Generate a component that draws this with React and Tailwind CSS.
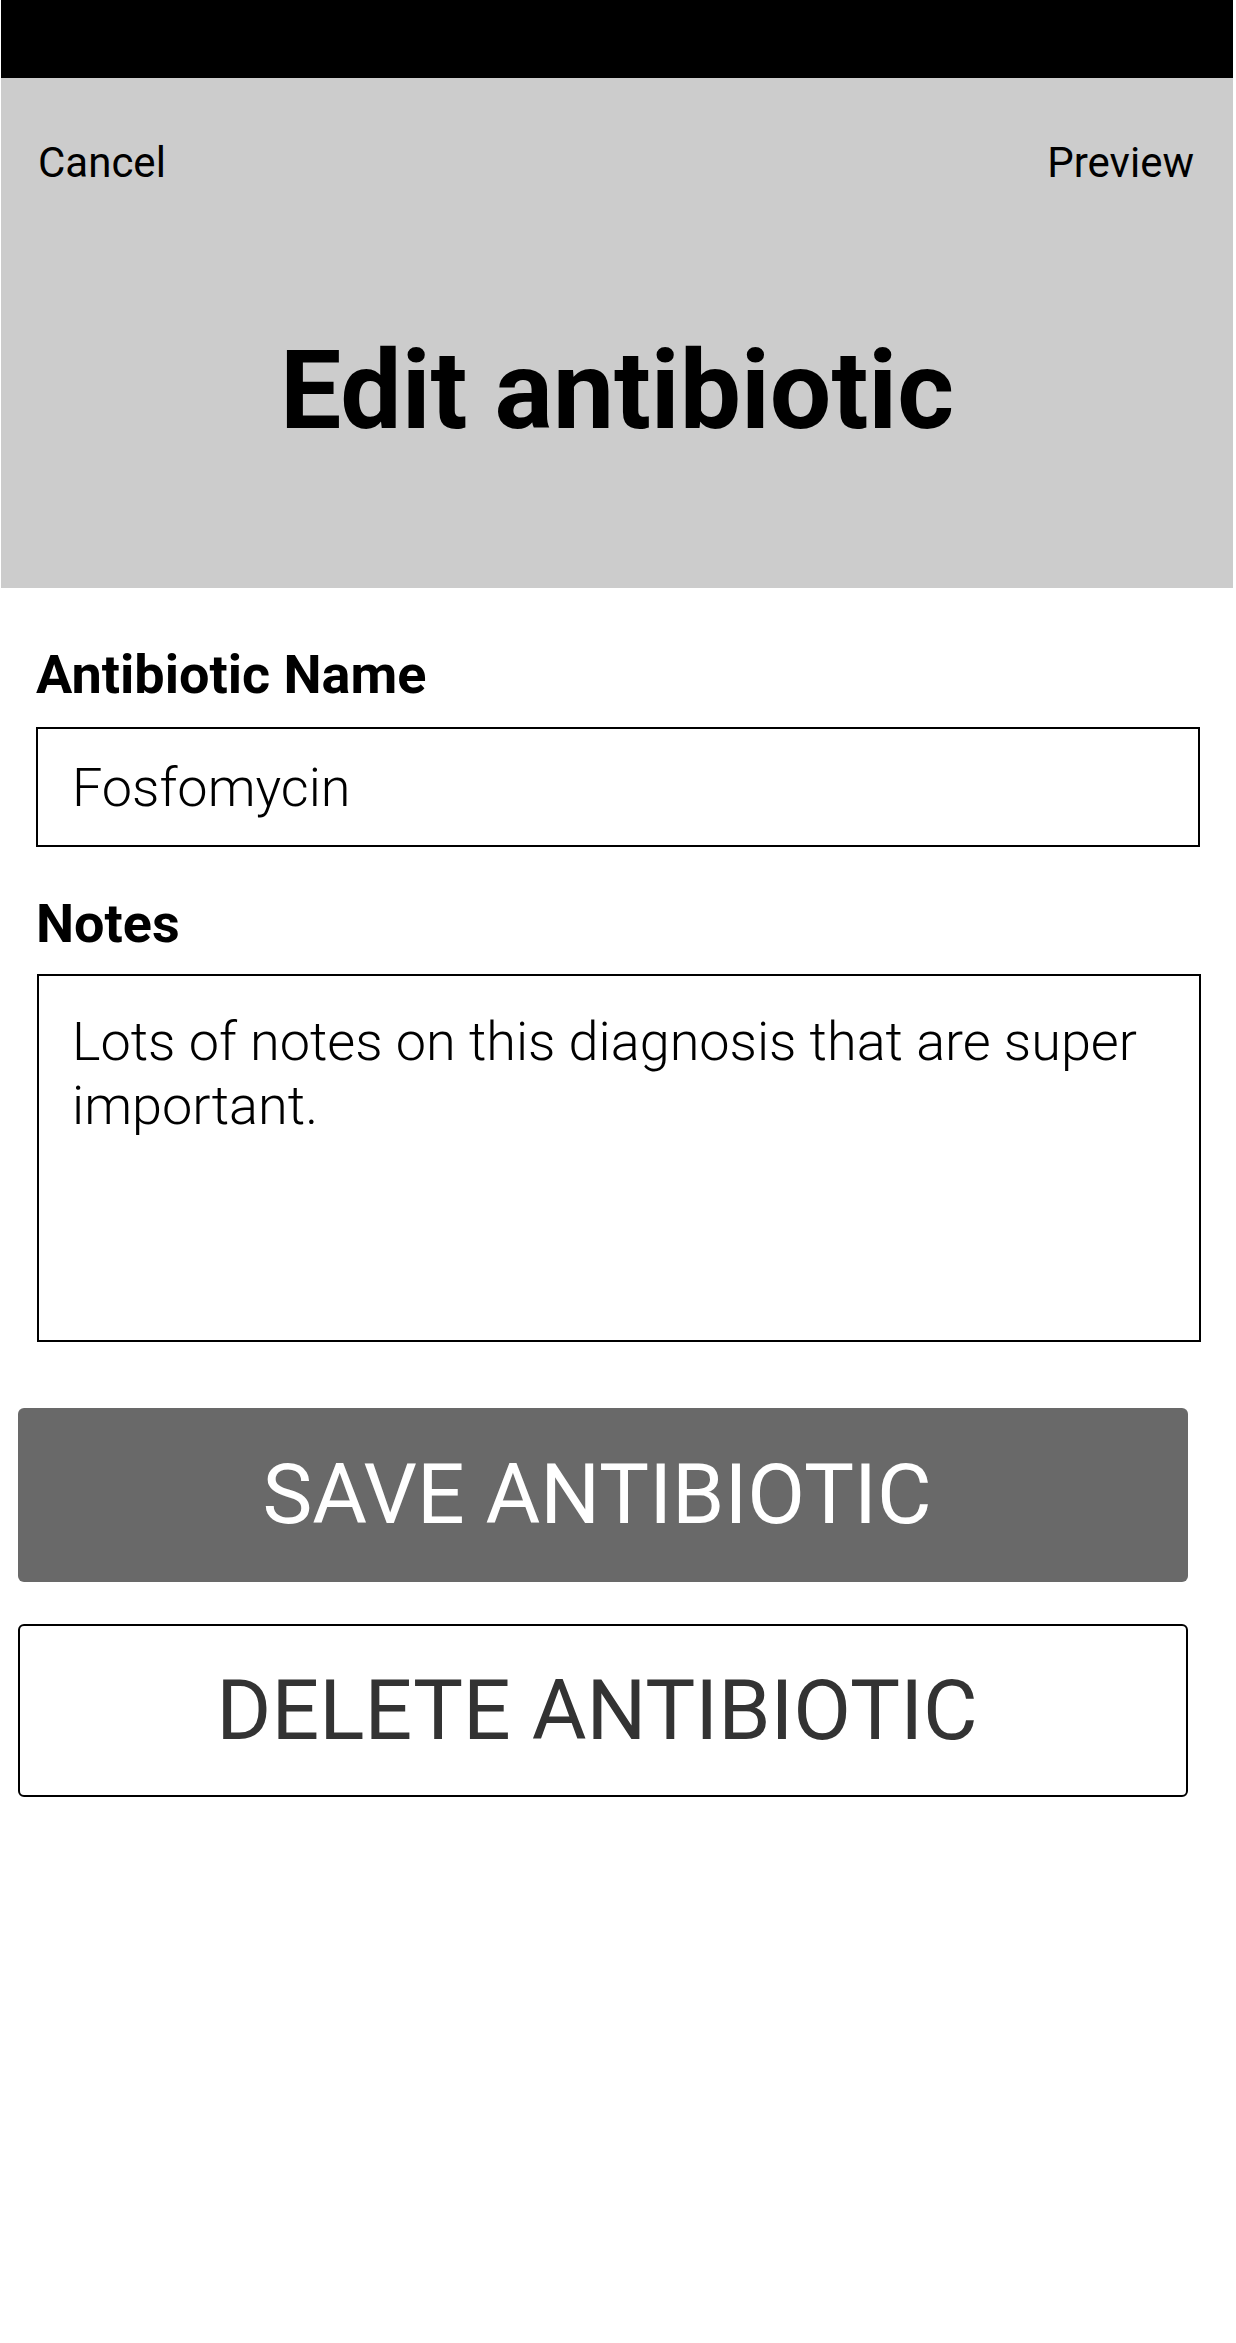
import React, { useState } from 'react';

const EditAntibioticPage = () => {
  const [name, setName] = useState('Fosfomycin');
  const [notes, setNotes] = useState('Lots of notes on this diagnosis that are super important.');

  return (
    <div className="min-h-[2343px] bg-white font-['Roboto',sans-serif] text-black">
      {/* Status bar + header */}
      <div className="pl-[1px] pr-[3px]">
        <div className="h-[78px] bg-black" />
        <header className="h-[510px] bg-[#cccccc] flex flex-col">
          <div className="flex justify-between pl-[37px] pr-[39px] pt-[64px] text-[42px] leading-none">
            <button type="button">Cancel</button>
            <button type="button">Preview</button>
          </div>
          <h1 className="mt-[153px] text-center text-[109px] font-bold leading-none">
            Edit antibiotic
          </h1>
        </header>
      </div>

      {/* Form */}
      <form className="flex flex-col" onSubmit={(e) => e.preventDefault()}>
        <div className="px-[36px]">
          <label htmlFor="name" className="block mt-[60px] text-[54px] font-bold leading-none">
            Antibiotic Name
          </label>
          <input
            id="name"
            type="text"
            value={name}
            onChange={(e) => setName(e.target.value)}
            className="mt-[25px] block w-full h-[120px] border-2 border-black px-[34px] text-[54px] font-light leading-none outline-none"
          />

          <label htmlFor="notes" className="block mt-[50px] text-[54px] font-bold leading-none">
            Notes
          </label>
        </div>
        <div className="pl-[37px] pr-[35px]">
          <textarea
            id="notes"
            value={notes}
            onChange={(e) => setNotes(e.target.value)}
            className="mt-[23px] block w-full h-[368px] border-2 border-black pl-[33px] pr-[20px] pt-[34px] text-[54px] font-light leading-[64px] resize-none outline-none"
          />
        </div>

        {/* Buttons */}
        <div className="pl-[18px] pr-[48px] flex flex-col">
          <button
            type="submit"
            className="mt-[66px] h-[174px] pr-[12px] rounded-[6px] bg-[#696969] text-white text-[84px] leading-none"
          >
            SAVE ANTIBIOTIC
          </button>
          <button
            type="button"
            className="mt-[42px] h-[173px] pr-[12px] rounded-[6px] border-2 border-black bg-white text-[#333333] text-[84px] leading-none"
          >
            DELETE ANTIBIOTIC
          </button>
        </div>
      </form>
    </div>
  );
};

export default EditAntibioticPage;
